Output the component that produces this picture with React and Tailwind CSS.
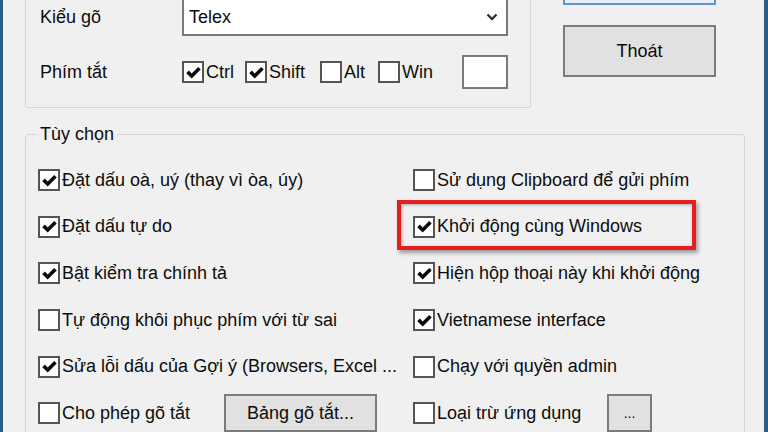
import React from "react"

function Check({ checked }) {
  return (
    <span className="flex h-[22px] w-[22px] shrink-0 items-center justify-center border-2 border-[#555] bg-white">
      {checked && (
        <svg viewBox="0 0 16 16" className="h-[17px] w-[17px]">
          <path d="M1.2 8.6 L3.6 6.2 L6.3 8.9 L12.4 2.8 L14.8 5.2 L6.3 13.7 Z" fill="#0a0a0a" />
        </svg>
      )}
    </span>
  )
}

function Option({ checked, label, className = "" }) {
  return (
    <div className={"flex items-center gap-[2px] " + className}>
      <Check checked={checked} />
      <span className="whitespace-nowrap">{label}</span>
    </div>
  )
}

function Btn({ children, className = "" }) {
  return (
    <div className={"flex items-center justify-center border-2 border-[#7c7c7c] bg-[#e1e1e1] " + className}>
      {children}
    </div>
  )
}

const rows = [
  [{ c: true, t: "Đặt dấu oà, uý (thay vì òa, úy)" }, { c: false, t: "Sử dụng Clipboard để gửi phím" }],
  [{ c: true, t: "Đặt dấu tự do" }, { c: true, t: "Khởi động cùng Windows", mark: true }],
  [{ c: true, t: "Bật kiểm tra chính tả" }, { c: true, t: "Hiện hộp thoại này khi khởi động" }],
  [{ c: false, t: "Tự động khôi phục phím với từ sai" }, { c: true, t: "Vietnamese interface" }],
  [{ c: true, t: "Sửa lỗi dấu của Gợi ý (Browsers, Excel ..." }, { c: false, t: "Chạy với quyền admin" }],
]

export default function App() {
  return (
    <div className="flex h-[432px] w-[768px] overflow-hidden bg-[#f0f0f0] font-['Liberation_Sans',Arial,sans-serif] text-[18px] text-[#0d0d0d]">
      <div className="w-[3px] shrink-0 bg-[#2d5d84]" />
      <div className="flex w-[757px] flex-col">
        {/* top section */}
        <div className="flex h-[108px] items-start">
          <div className="ml-[22px] flex h-[108px] w-[506px] flex-col rounded-b-[3px] border-x border-b border-[#d6d6d6] pl-[14px]">
            <div className="-mt-[2px] flex h-[38px] items-center">
              <span className="w-[142px]">Kiểu gõ</span>
              <div className="flex h-[38px] w-[326px] items-center justify-between border-2 border-[#7a7a7a] bg-white pl-[5px] pr-[8px]">
                <span>Telex</span>
                <svg viewBox="0 0 12 8" className="h-[8px] w-[12px]">
                  <path d="M1.5 1.5 L6 6 L10.5 1.5" fill="none" stroke="#333" strokeWidth="2.4" />
                </svg>
              </div>
            </div>
            <div className="mt-[19px] flex h-[34px] items-center">
              <span className="w-[142px]">Phím tắt</span>
              <Option checked label="Ctrl" className="w-[63px]" />
              <Option checked label="Shift" className="w-[75px]" />
              <Option label="Alt" className="w-[58px]" />
              <Option label="Win" className="w-[84px]" />
              <div className="h-[34px] w-[46px] border-2 border-[#7a7a7a] bg-white" />
            </div>
          </div>
          <div className="ml-[32px] flex w-[153px] flex-col">
            <div className="-mt-[47px] h-[52px] border-2 border-[#5f95c8] bg-[#e5eef7]" />
            <Btn className="mt-[20px] h-[52px]">Thoát</Btn>
          </div>
        </div>

        {/* options */}
        <fieldset className="mt-[15px] ml-[22px] w-[720px] rounded-[3px] border border-[#d6d6d6] pl-[12px] pt-[12px]">
          <legend className="-ml-px px-[3px] leading-[22px]">Tùy chọn</legend>
          <div className="grid grid-cols-[375px_1fr]">
            {rows.map((r, i) => (
              <React.Fragment key={i}>
                <div className="flex h-[46.6px] items-center overflow-hidden">
                  <Option checked={r[0].c} label={r[0].t} />
                </div>
                <div className="relative flex h-[46.6px] items-center">
                  <Option checked={r[1].c} label={r[1].t} />
                  {r[1].mark && (
                    <div className="absolute left-[-16px] top-[-4px] h-[50px] w-[299px] border-[4px] border-[#e3201f] shadow-[2px_3px_4px_rgba(0,0,0,0.35),inset_1px_1px_3px_rgba(0,0,0,0.3)]" />
                  )}
                </div>
              </React.Fragment>
            ))}
            <div className="flex h-[46.6px] items-center">
              <Option label="Cho phép gõ tắt" className="w-[186px]" />
              <Btn className="h-[38px] w-[153px]">Bảng gõ tắt...</Btn>
            </div>
            <div className="flex h-[46.6px] items-center">
              <Option label="Loại trừ ứng dụng" className="w-[194px]" />
              <Btn className="h-[38px] w-[45px] text-[14px]">...</Btn>
            </div>
          </div>
        </fieldset>
      </div>
      <div className="ml-auto w-[4px] shrink-0 bg-[#2d5d84]" />
    </div>
  )
}
